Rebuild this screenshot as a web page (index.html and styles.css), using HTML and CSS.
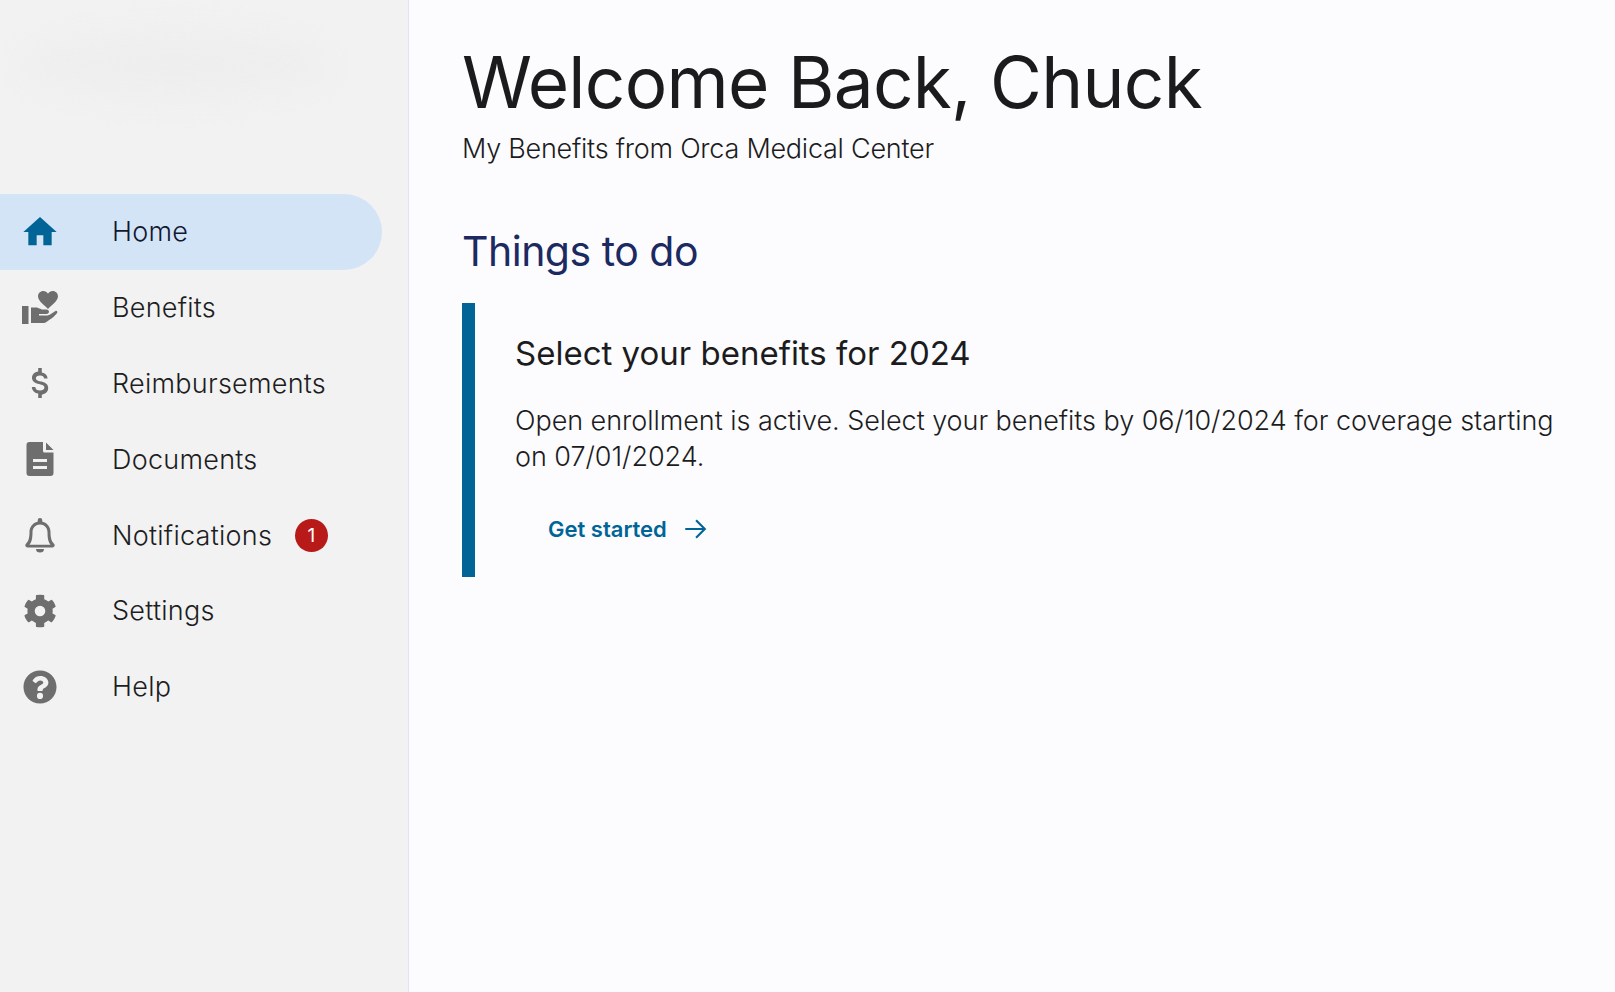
FILE: index.html
```html
<!doctype html>
<html lang="en">
 <head>
  <meta charset="UTF-8">
  <title>Home</title>
  <link rel="stylesheet" href="styles.css">
 </head>
 <body>
  <div class="page">
   <aside class="sidebar">
    <div class="logoArea"><div class="logoBlur"></div></div>
    <nav class="nav">
     <a class="navItem active" href="#">
      <span class="navIcon"><svg viewBox="0 0 24 24"><path d="M10 20v-6h4v6h5v-8h3L12 3 2 12h3v8z"/></svg></span>
      <span class="navLabel">Home</span>
     </a>
     <a class="navItem" href="#">
      <span class="navIcon"><svg viewBox="0 0 36 36"><path d="M24.500 1c-2 0-3.400 1-4.500 2.500C18.900 2 17.500 1 15.500 1 12.700 1 10.500 3.200 10.500 6c0 4.500 5.500 8 9.500 12 4-4 9.500-7.500 9.500-12 0-2.800-2.200-5-5-5z" transform="translate(5 0) scale(1.05)"/><path d="M0 16h6.500v18H0zM9 17.500h5.500c1 0 5 2 6 2h4c1.500 0 2.500 1 2.500 2.300 0 1.200-1 2.200-2.500 2.200H17v1.500h8.500c1 0 2-.5 3-1.200l5-3.300c1.200-.7 2.500 1 1.500 2.200-2 2.500-5 5-7.500 6.500-1.800 1.200-3.500 3.300-6 3.300H9z"/></svg></span>
      <span class="navLabel">Benefits</span>
     </a>
     <a class="navItem" href="#">
      <span class="navIcon"><svg viewBox="0 0 36 36"><path d="M19.800 6.500V3h-3.600v3.400c-3.600.5-6.200 2.900-6.200 6.300 0 3.900 3.200 5.400 7 6.300 3.600.8 5.400 1.700 5.400 3.500 0 2-1.900 3-4.400 3-2.800 0-4.500-1.300-4.700-3.600h-3.500c.2 3.800 3 6 6.400 6.700V33h3.600v-3.300c3.700-.6 6.400-2.900 6.400-6.600 0-4.300-3.500-5.600-7.200-6.500-3.600-.8-5.200-1.600-5.200-3.300 0-1.700 1.700-2.800 4.200-2.800 2.600 0 3.900 1.200 4.100 3.100h3.500c-.2-3.300-2.300-5.400-5.800-6.100z"/></svg></span>
      <span class="navLabel">Reimbursements</span>
     </a>
     <a class="navItem" href="#">
      <span class="navIcon"><svg viewBox="0 0 36 36"><path fill-rule="evenodd" d="M7.500 1A3 3 0 0 0 4.500 4v28a3 3 0 0 0 3 3h21a3 3 0 0 0 3-3V11.500H22.500a1.500 1.500 0 0 1-1.500-1.500V1zM24 1.500V9h7.500zM11 18h14v3H11zM11 25h14v3H11z"/></svg></span>
      <span class="navLabel">Documents</span>
     </a>
     <a class="navItem" href="#">
      <span class="navIcon"><svg viewBox="0 0 36 36"><path fill-rule="evenodd" d="M18 1a2.300 2.300 0 0 0-2.300 2.300v1.400C10.500 5.800 7.500 10 7.500 15c0 7-1.500 9.500-3.500 11.700-.5.500-.7 1-.7 1.600 0 1.200.9 2.200 2.300 2.200h24.800c1.400 0 2.300-1 2.300-2.200 0-.6-.2-1.100-.7-1.600-2-2.200-3.500-4.700-3.500-11.700 0-5-3-9.200-8.200-10.300V3.300A2.300 2.300 0 0 0 18 1zM7.500 27.800c1.900-2.400 3-5.600 3-12.800 0-4.200 3.300-7.500 7.500-7.500s7.500 3.300 7.500 7.500c0 7.200 1.100 10.400 3 12.800z"/><path d="M14 32h8a4 3.500 0 0 1-8 0z"/></svg></span>
      <span class="navLabel">Notifications</span>
      <span class="badge">1</span>
     </a>
     <a class="navItem" href="#">
      <span class="navIcon"><svg viewBox="-16 -16 544 544"><path d="M487 316l-42-24a190 190 0 0 0 0-70l42-25a12 12 0 0 0 5-14c-11-35-30-67-54-93a12 12 0 0 0-15-2l-42 24a187 187 0 0 0-61-35V28a12 12 0 0 0-9-12 245 245 0 0 0-108 0 12 12 0 0 0-9 12v49a193 193 0 0 0-61 35L91 88a12 12 0 0 0-15 2 245 245 0 0 0-54 93 12 12 0 0 0 5 14l42 25a190 190 0 0 0 0 70l-42 24a12 12 0 0 0-5 14c11 35 30 67 54 93a12 12 0 0 0 15 2l42-24a187 187 0 0 0 61 35v49a12 12 0 0 0 9 12 245 245 0 0 0 108 0 12 12 0 0 0 9-12v-49a193 193 0 0 0 61-35l42 24a12 12 0 0 0 15-2 245 245 0 0 0 54-93 12 12 0 0 0-5-14zM256 336a80 80 0 1 1 0-160 80 80 0 0 1 0 160z"/></svg></span>
      <span class="navLabel">Settings</span>
     </a>
     <a class="navItem" href="#">
      <span class="navIcon"><svg viewBox="-14 -14 540 540"><path d="M504 256c0 137-111 248-248 248S8 393 8 256C8 119 119 8 256 8s248 111 248 248zM263 90c-55 0-89 23-116 63a12 12 0 0 0 3 16l35 26a12 12 0 0 0 16-2c18-23 30-36 58-36 21 0 46 13 46 33 0 15-12 23-33 34-23 13-55 30-55 72v8a12 12 0 0 0 12 12h56a12 12 0 0 0 12-12v-5c0-29 85-31 85-110 0-60-62-99-119-99zM256 344a46 46 0 1 0 0 92 46 46 0 0 0 0-92z"/></svg></span>
      <span class="navLabel">Help</span>
     </a>
    </nav>
   </aside>
   <main class="main">
    <h1 class="welcome">Welcome Back, Chuck</h1>
    <p class="subtitle">My Benefits from Orca Medical Center</p>
    <h2 class="sectionTitle">Things to do</h2>
    <div class="todo">
     <h3 class="todoTitle">Select your benefits for 2024</h3>
     <p class="todoText">Open enrollment is active. Select your benefits by 06/10/2024 for coverage starting on 07/01/2024.</p>
     <a class="todoLink" href="#">Get started
      <svg class="arrow" viewBox="0 0 24 24"><path d="M3 12h18M13 4l8 8-8 8"/></svg>
     </a>
    </div>
   </main>
  </div>
 </body>
</html>
```

FILE: styles.css
```css
*
{
  margin: 0;
  padding: 0;
  box-sizing: border-box;
  font-family: 'Inter', 'Liberation Sans', sans-serif;
}
body
{
  background: #fcfcff;
  color: #1c1c1e;
}
a
{
  text-decoration: none;
  color: inherit;
}
.page
{
  display: flex;
  min-height: 100vh;
}
.sidebar
{
  width: 409px;
  flex-shrink: 0;
  background: #f2f2f2;
  border-right: 1px solid #e4e4ee;
  padding-right: 26px;
}
.logoArea
{
  height: 194px;
  overflow: hidden;
}
.logoBlur
{
  width: 310px;
  height: 70px;
  margin: 30px 0 0 20px;
  background: #eeeeee;
  border-radius: 50%;
  filter: blur(14px);
}
.nav
{
  display: flex;
  flex-direction: column;
}
.navItem
{
  display: flex;
  align-items: center;
  height: 75.8px;
  padding-left: 21px;
  font-size: 27px;
  font-weight: 300;
  letter-spacing: 0.25px;
  color: #1d1d22;
}
.navItem.active
{
  background: #d3e4f7;
  border-radius: 0 38px 38px 0;
  color: #11182f;
}
.navIcon
{
  width: 38px;
  height: 36px;
  margin-right: 53px;
  display: flex;
  justify-content: center;
  align-items: center;
}
.navIcon svg
{
  width: 36px;
  height: 36px;
  fill: #6e6e6e;
}
.active .navIcon svg
{
  width: 40px;
  height: 40px;
  flex-shrink: 0;
  fill: #006596;
}
.badge
{
  width: 33px;
  height: 33px;
  margin-left: 23px;
  border-radius: 50%;
  background: #b81a1a;
  color: #fff;
  font-size: 19px;
  font-weight: 400;
  display: flex;
  justify-content: center;
  align-items: center;
}
.main
{
  flex: 1;
  padding: 38px 40px 0 53px;
}
.welcome
{
  font-size: 71px;
  font-weight: 400;
  line-height: 88px;
  letter-spacing: -0.7px;
  color: #1b1b1d;
}
.subtitle
{
  font-size: 27px;
  font-weight: 300;
  line-height: 34px;
  letter-spacing: -0.25px;
  margin-top: 6px;
}
.sectionTitle
{
  font-size: 41px;
  font-weight: 400;
  line-height: 52px;
  letter-spacing: -0.5px;
  color: #1c2a62;
  margin-top: 59px;
}
.todo
{
  margin-top: 26px;
  border-left: 13px solid #006596;
  padding: 28px 0 0 40px;
  height: 274px;
}
.todoTitle
{
  font-size: 33px;
  font-weight: 400;
  line-height: 44px;
}
.todoText
{
  font-size: 27px;
  font-weight: 300;
  line-height: 36px;
  letter-spacing: -0.05px;
  margin-top: 28px;
}
.todoLink
{
  display: inline-flex;
  align-items: center;
  gap: 15px;
  margin: 41px 0 0 33px;
  font-size: 22px;
  font-weight: 600;
  color: #006596;
}
.arrow
{
  width: 26px;
  height: 26px;
  fill: none;
  stroke: #006596;
  stroke-width: 2;
}
```
